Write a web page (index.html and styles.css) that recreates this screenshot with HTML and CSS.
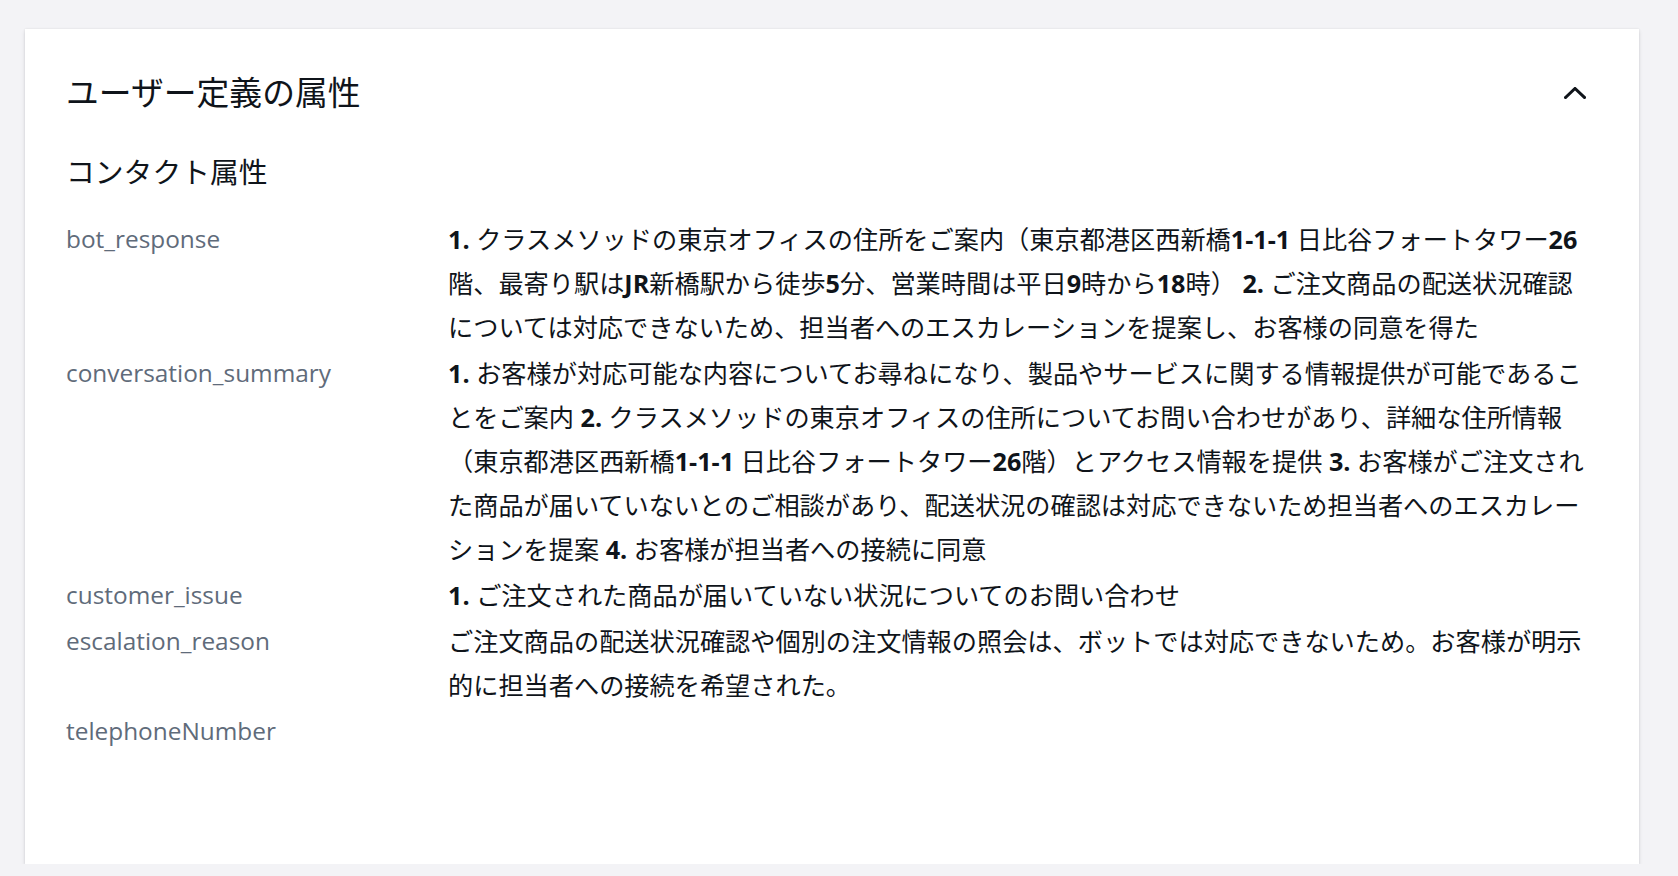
FILE: index.html
```html
<!DOCTYPE html>
<html lang="ja">
<head>
<meta charset="utf-8">
<title>ユーザー定義の属性</title>
<link rel="stylesheet" href="styles.css">
</head>
<body>
<main class="page">
  <section class="card">
    <header class="card-header">
      <h2 class="title">ユーザー定義の属性</h2>
      <button class="toggle" aria-label="折りたたむ">
        <svg width="22" height="12" viewBox="0 0 22 12" aria-hidden="true">
          <path d="M1.5 10.5 L11 1.5 L20.5 10.5" fill="none" stroke="#0f141a" stroke-width="3" stroke-linecap="square" stroke-linejoin="miter"/>
        </svg>
      </button>
    </header>
    <h3 class="subtitle">コンタクト属性</h3>
    <dl class="attrs">
      <dt class="key">bot_response</dt>
      <dd class="value"><b>1.</b> クラスメソッドの東京オフィスの住所をご案内（東京都港区西新橋<b>1-1-1</b> 日比谷フォートタワー<b>26</b>階、最寄り駅は<b>JR</b>新橋駅から徒歩<b>5</b>分、営業時間は平日<b>9</b>時から<b>18</b>時） <b>2.</b> ご注文商品の配送状況確認については対応できないため、担当者へのエスカレーションを提案し、お客様の同意を得た</dd>

      <dt class="key">conversation_summary</dt>
      <dd class="value"><b>1.</b> お客様が対応可能な内容についてお尋ねになり、製品やサービスに関する情報提供が可能であることをご案内 <b>2.</b> クラスメソッドの東京オフィスの住所についてお問い合わせがあり、詳細な住所情報（東京都港区西新橋<b>1-1-1</b> 日比谷フォートタワー<b>26</b>階）とアクセス情報を提供 <b>3.</b> お客様がご注文された商品が届いていないとのご相談があり、配送状況の確認は対応できないため担当者へのエスカレーションを提案 <b>4.</b> お客様が担当者への接続に同意</dd>

      <dt class="key">customer_issue</dt>
      <dd class="value"><b>1.</b> ご注文された商品が届いていない状況についてのお問い合わせ</dd>

      <dt class="key">escalation_reason</dt>
      <dd class="value">ご注文商品の配送状況確認や個別の注文情報の照会は、ボットでは対応できないため。お客様が明示的に担当者への接続を希望された。</dd>

      <dt class="key">telephoneNumber</dt>
      <dd class="value"></dd>
    </dl>
  </section>
</main>
</body>
</html>
```
FILE: styles.css
```css
* {
  box-sizing: border-box;
}

html, body {
  margin: 0;
  padding: 0;
}

body {
  background: #f3f3f6;
  color: #0f141a;
  font-family: "Open Sans", "Noto Sans CJK JP", sans-serif;
}

.page {
  padding: 29px 39px 0 25px;
}

.card {
  background: #ffffff;
  height: 835px;
  padding: 42px 44px 0 41px;
  box-shadow: 0 2px 4px rgba(0, 7, 22, 0.12), 0 0 2px rgba(0, 7, 22, 0.08);
}

.card-header {
  display: flex;
  align-items: center;
  justify-content: space-between;
}

.title {
  margin: 0;
  font-size: 32.8px;
  line-height: 44px;
  font-weight: 400;
  color: #0f141a;
}

.toggle {
  width: 44px;
  height: 44px;
  padding: 0;
  margin: 0 -2px 0 0;
  border: 0;
  background: transparent;
  display: flex;
  align-items: center;
  justify-content: center;
}

.subtitle {
  margin: 37px 0 0;
  font-size: 28.8px;
  line-height: 40px;
  font-weight: 400;
  color: #0f141a;
}

.attrs {
  margin: 25px 0 0;
  display: grid;
  grid-template-columns: 382px 1fr;
  row-gap: 2px;
}

.key {
  margin: 0;
  font-size: 24.4px;
  line-height: 44px;
  color: #5f6b7a;
}

.value {
  margin: 0;
  font-size: 25.2px;
  line-height: 44px;
  color: #0f141a;
  min-height: 44px;
}

.value b {
  font-weight: 700;
}
```
